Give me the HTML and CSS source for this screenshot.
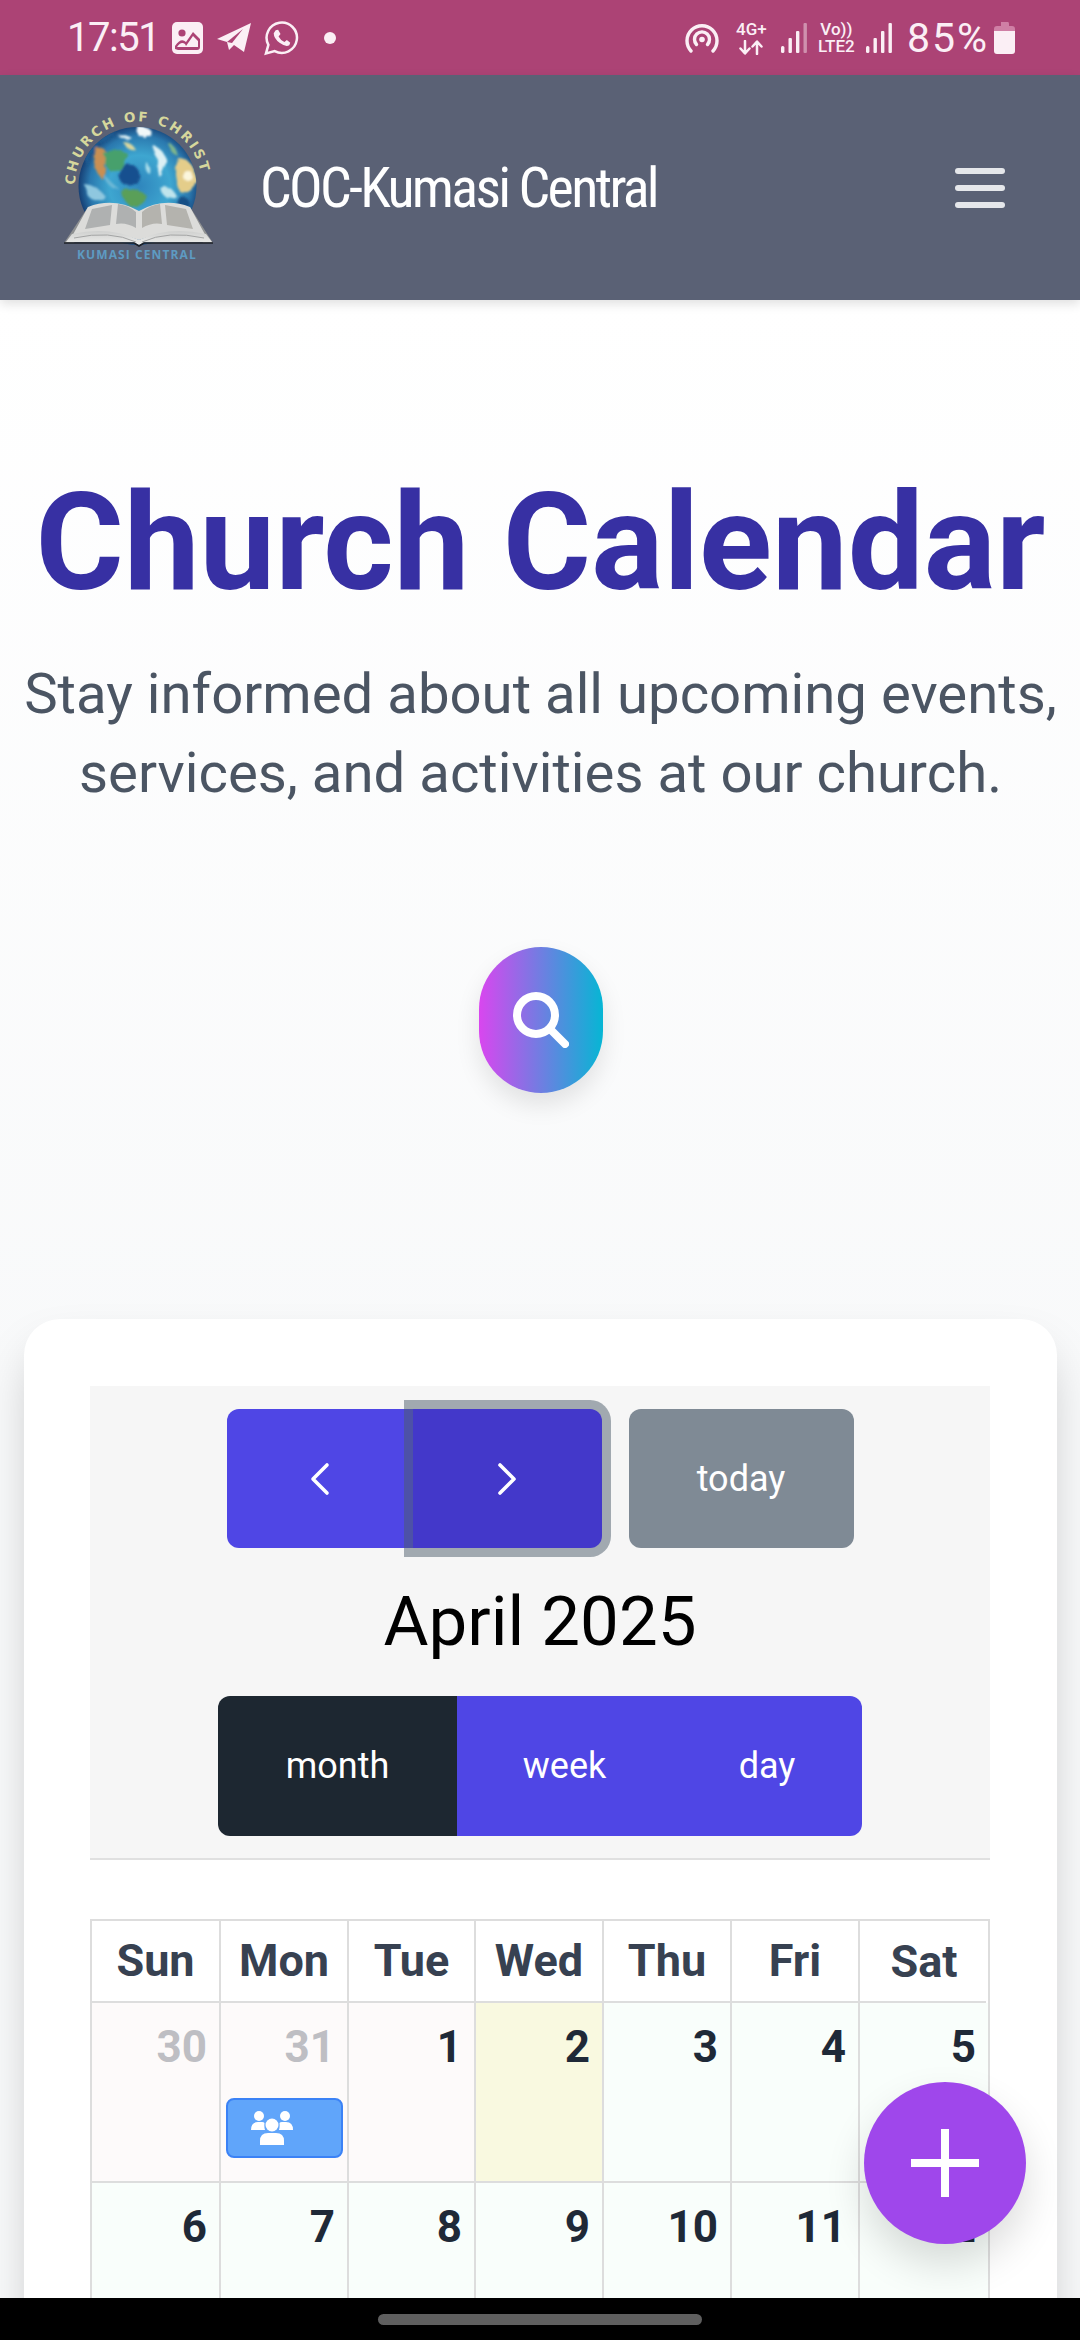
FILE: index.html
```html
<!DOCTYPE html>
<html lang="en">

<head>
    <meta charset="UTF-8">
    <meta name="viewport" content="width=device-width, initial-scale=1.0">
    <title>Church Calendar</title>
    <link rel="stylesheet" href="styles.css">
</head>

<body>
    <div class="status-bar">
        <div class="status-left">
            <span class="status-time">17:51</span>
            <svg class="ic-image" viewBox="0 0 31 32"><rect width="31" height="32" rx="5" fill="#fbeff5"/><circle cx="10" cy="11" r="3.6" fill="#ac4375"/><path d="M3 27 L3 24 Q9 15 14 20 L21 10 L28 17 V25 Q28 28 25 28 H6 Z" fill="#ac4375"/><path d="M5 25 Q9 19 13 22 L14 24 L21 14 L26 19 V25 Z" fill="#fbeff5"/></svg>
            <svg class="ic-telegram" viewBox="0 0 34 32"><path d="M0 17 L34 1 L27 30 L17 23 L12 28 L10 20 Z" fill="#fbeff5"/><path d="M10 20 L26 7 L15 21" fill="#ac4375"/></svg>
            <svg class="ic-whatsapp" viewBox="0 0 36 36"><path d="M2 34 L4.5 25 A15.6 15.6 0 1 1 11 31.5 Z" fill="none" stroke="#fbeff5" stroke-width="2.6"/><path d="M12 10 L14.5 9.5 L17 14 L15 16.5 Q17 20.500 21 22 L23.500 20 L27 23 L26 25.500 Q22 27.500 16 23 Q10 18 10 13 Z" fill="#fbeff5"/></svg>
            <span class="status-dot"></span>
        </div>
        <div class="status-right">
            <svg class="ic-hotspot" viewBox="0 0 34 30"><path d="M6 28 A15 15 0 1 1 28 28" fill="none" stroke="#fbeff5" stroke-width="3.400" stroke-linecap="round"/><path d="M11.500 21.500 A7.500 7.500 0 1 1 22.500 21.500" fill="none" stroke="#fbeff5" stroke-width="3.400" stroke-linecap="round"/><circle cx="17" cy="16.500" r="2.800" fill="#fbeff5"/></svg>
            <span class="net-label net-4g">4G+
                <svg class="net-arrows" viewBox="0 0 24 15"><path d="M6 1 V13 M1.500 8.500 L6 13.500 L10.500 8.500 M18 14 V2 M13.500 6.500 L18 1.500 L22.500 6.500" fill="none" stroke="#fbeff5" stroke-width="2.500" stroke-linecap="round" stroke-linejoin="round"/></svg>
            </span>
            <svg class="ic-signal" viewBox="0 0 26 30"><rect x="0" y="23" width="3.400" height="7" rx="1.500" fill="#fbeff5"/><rect x="7.500" y="15" width="3.400" height="15" rx="1" fill="#fbeff5"/><rect x="15" y="8" width="3.400" height="22" rx="1" fill="#fbeff5"/><rect x="22.500" y="0" width="3.400" height="30" rx="1" fill="#fbeff5" opacity=".45"/></svg>
            <span class="net-label net-volte">Vo))<br>LTE2</span>
            <svg class="ic-signal" viewBox="0 0 26 30"><rect x="0" y="23" width="3.400" height="7" rx="1.500" fill="#fbeff5"/><rect x="7.500" y="15" width="3.400" height="15" rx="1" fill="#fbeff5"/><rect x="15" y="8" width="3.400" height="22" rx="1" fill="#fbeff5"/><rect x="22.500" y="0" width="3.400" height="30" rx="1" fill="#fbeff5"/></svg>
            <span class="status-batt-text">85%</span>
            <svg class="ic-battery" viewBox="0 0 21 32"><path d="M7 0 H14 Q15 0 15 2 V4 H7 V2 Q7 0 7 0 Z M3 4 H18 Q21 4 21 7 V9 H0 V7 Q0 4 3 4 Z" fill="#cf7fa5"/><path d="M0 9 H21 V29 Q21 32 18 32 H3 Q0 32 0 29 Z" fill="#fbeff5"/></svg>
        </div>
    </div>

    <header class="app-bar">
        <svg class="logo" viewBox="0 0 160 170">
            <defs>
                <radialGradient id="globe" cx="52%" cy="50%" r="52%">
                    <stop offset="0" stop-color="#2f86bd"/>
                    <stop offset=".5" stop-color="#3ea6d0"/>
                    <stop offset=".82" stop-color="#2a78ae"/>
                    <stop offset="1" stop-color="#163f74"/>
                </radialGradient>
                <linearGradient id="cover" x1="0" y1="0" x2="0" y2="1">
                    <stop offset="0" stop-color="#cfd0cf"/>
                    <stop offset="1" stop-color="#eeeeec"/>
                </linearGradient>
                <clipPath id="globeClip"><circle cx="77.500" cy="86" r="59"/></clipPath>
                <filter id="paint" x="-10%" y="-10%" width="120%" height="120%">
                    <feTurbulence type="fractalNoise" baseFrequency=".14" numOctaves="2" seed="4"/>
                    <feDisplacementMap in="SourceGraphic" scale="5"/>
                    <feGaussianBlur stdDeviation="1"/>
                </filter>
                <path id="arc" d="M15 85 A63 63 0 0 1 142 85"/>
            </defs>
            <circle cx="77.500" cy="86" r="59" fill="url(#globe)"/>
            <g clip-path="url(#globeClip)">
                <g filter="url(#paint)">
                    <path d="M24 58 Q36 34 58 32 L40 44 Q30 50 28 66 Z" fill="#1d5c92"/>
                    <path d="M34 50 Q42 44 46 52 Q46 68 43 80 Q32 70 34 50 Z" fill="#c88f52"/>
                    <path d="M44 54 Q56 46 68 54 Q66 68 54 72 Q46 72 44 54 Z" fill="#47a06c"/>
                    <path d="M63 42 Q72 42 76 50 Q68 52 63 42 Z" fill="#d9d79f"/>
                    <path d="M76 27 Q88 26 92 32 Q88 38 80 37 Q76 33 76 27 Z" fill="#f1f8f9"/>
                    <path d="M58 36 Q66 34 72 38 Q66 42 58 36 Z" fill="#dff0f3"/>
                    <path d="M94 46 Q102 48 107 60 Q104 70 100 78 Q97 70 98 60 Q92 52 94 46 Z" fill="#dcf0f4"/>
                    <path d="M108 42 Q116 46 118 56 Q110 54 108 42 Z" fill="#7fb58c"/>
                    <path d="M118 58 Q132 58 137 78 Q132 96 120 92 Q113 74 118 58 Z" fill="#e4cd8a"/>
                    <circle cx="128" cy="76" r="5" fill="#fbf6dc"/>
                    <circle cx="69" cy="75" r="10.500" fill="#174f8f"/>
                    <path d="M86 62 Q92 66 90 74 Q84 72 86 62 Z" fill="#a6dbe9"/>
                    <path d="M60 90 Q74 86 87 96 Q84 106 72 108 Q64 102 60 90 Z" fill="#5a9f58"/>
                    <path d="M24 84 Q36 84 47 98 Q36 104 28 96 Z" fill="#8fc7df"/>
                    <path d="M100 88 Q112 84 116 96 Q106 104 100 88 Z" fill="#bfe4ec"/>
                    <path d="M44 74 Q50 82 58 88 Q48 90 44 74 Z" fill="#6db8d6"/>
                    <path d="M120 96 Q130 96 130 106 L114 112 Z" fill="#194f86"/>
                </g>
            </g>
            <text class="logo-arc"><textPath href="#arc">CHURCH OF CHRIST</textPath></text>

            <path d="M28 107 L4 143 L14 143 L33 110 Z M130 107 L153 143 L143 143 L125 110 Z" fill="#8f9192"/>
            <path d="M28 107 Q54 97 79 111 L79 140 Q50 128 10 140 Z" fill="#dcdcda"/>
            <path d="M130 107 Q104 97 79 111 L79 140 Q108 128 148 140 Z" fill="#dcdcda"/>
            <path d="M32 109 L52 105 L50 125 L25 129 Z M58 104 Q68 105 76 112 L76 128 Q66 122 56 124 Z" fill="#afb1b1"/>
            <path d="M126 109 L105 105 L107 125 L133 129 Z M100 104 Q90 105 82 112 L82 128 Q92 122 102 124 Z" fill="#b4b3ae"/>
            <path d="M6 142 L12 134 Q50 126 79 140 Q108 126 146 134 L152 142 L84 142.500 L79 145 L74 142.500 Z" fill="url(#cover)"/>
            <path d="M14 138 Q50 130 76 142 M144 138 Q108 130 82 142" fill="none" stroke="#a3a4a4" stroke-width="1"/>
            <path d="M4 143 L74 143 L79 146 L84 143 L153 143" fill="none" stroke="#1d2027" stroke-width="1.600"/>
            <text class="logo-foot" x="17" y="159">KUMASI CENTRAL</text>
        </svg>
        <span class="brand">COC-Kumasi Central</span>
        <button class="menu-btn" aria-label="menu"><span></span><span></span><span></span></button>
    </header>

    <main class="page">
        <section class="hero">
            <h1>Church Calendar</h1>
            <p>Stay informed about all upcoming events, services, and activities at our church.</p>
            <button class="search-btn" aria-label="search">
                <svg viewBox="0 0 56 56"><circle cx="23" cy="23" r="19" fill="none" stroke="#fff" stroke-width="8"/><path d="M37 37 L52 52" stroke="#fff" stroke-width="8" stroke-linecap="round"/></svg>
            </button>
        </section>

        <section class="card">
            <div class="cal-toolbar">
                <div class="nav-row">
                    <div class="nav-group">
                        <button class="cal-btn nav-prev"><svg viewBox="0 0 20 34"><path d="M17 3 L3 17 L17 31" fill="none" stroke="#fff" stroke-width="3.600" stroke-linecap="round" stroke-linejoin="round"/></svg></button>
                        <button class="cal-btn nav-next"><svg viewBox="0 0 20 34"><path d="M3 3 L17 17 L3 31" fill="none" stroke="#fff" stroke-width="3.600" stroke-linecap="round" stroke-linejoin="round"/></svg></button>
                    </div>
                    <button class="cal-btn today-btn">today</button>
                </div>
                <h2>April 2025</h2>
                <div class="view-group">
                    <button class="cal-btn view-month">month</button>
                    <button class="cal-btn view-week">week</button>
                    <button class="cal-btn view-day">day</button>
                </div>
            </div>

            <div class="cal-grid">
                <div class="cal-head">Sun</div>
                <div class="cal-head">Mon</div>
                <div class="cal-head">Tue</div>
                <div class="cal-head">Wed</div>
                <div class="cal-head">Thu</div>
                <div class="cal-head">Fri</div>
                <div class="cal-head">Sat</div>

                <div class="cal-day other"><span class="num">30</span></div>
                <div class="cal-day other"><span class="num">31</span>
                    <div class="cal-event">
                        <svg viewBox="0 0 42 34"><circle cx="8" cy="5" r="5" fill="#fff"/><circle cx="34" cy="5" r="5" fill="#fff"/><path d="M0 19 Q0 11 7 11 H11 Q13 11 13.500 12 Q13 16 14 19 Z M42 19 Q42 11 35 11 H31 Q29 11 28.500 12 Q29 16 28 19 Z" fill="#fff"/><circle cx="21" cy="14" r="6.500" fill="#fff"/><path d="M9 34 V30 Q9 22 17 22 H25 Q33 22 33 30 V34 Z" fill="#fff"/></svg>
                    </div>
                </div>
                <div class="cal-day past"><span class="num">1</span></div>
                <div class="cal-day today"><span class="num">2</span></div>
                <div class="cal-day"><span class="num">3</span></div>
                <div class="cal-day"><span class="num">4</span></div>
                <div class="cal-day"><span class="num">5</span></div>

                <div class="cal-day"><span class="num">6</span></div>
                <div class="cal-day"><span class="num">7</span></div>
                <div class="cal-day"><span class="num">8</span></div>
                <div class="cal-day"><span class="num">9</span></div>
                <div class="cal-day"><span class="num">10</span></div>
                <div class="cal-day"><span class="num">11</span></div>
                <div class="cal-day"><span class="num">12</span></div>
            </div>
        </section>

        <button class="fab" aria-label="add"><span class="fab-plus"></span></button>
    </main>

    <div class="nav-bar"><span class="nav-pill"></span></div>
</body>

</html>
```

FILE: styles.css
```css
* {
    box-sizing: border-box;
}

html,
body {
    margin: 0;
    height: 100%;
}

body {
    width: 1080px;
    height: 2340px;
    display: flex;
    flex-direction: column;
    overflow: hidden;
    font-family: Roboto, "Liberation Sans", sans-serif;
    background: #fff;
}

button {
    font-family: inherit;
    border: 0;
    padding: 0;
}

/* status bar */
.status-bar {
    height: 75px;
    flex: none;
    background: #ac4375;
    color: #fbeff5;
    display: flex;
    justify-content: space-between;
    align-items: center;
    padding: 0 65px 0 67px;
}

.status-left,
.status-right {
    display: flex;
    align-items: center;
}

.status-time {
    font-size: 40px;
    letter-spacing: -1.500px;
    width: 105px;
}

.ic-image {
    width: 31px;
    height: 32px;
}

.ic-telegram {
    width: 34px;
    height: 32px;
    margin-left: 14px;
}

.ic-whatsapp {
    width: 35px;
    height: 36px;
    margin-left: 13px;
}

.status-dot {
    width: 12px;
    height: 12px;
    border-radius: 50%;
    background: #fbeff5;
    margin-left: 25px;
}

.ic-hotspot {
    width: 34px;
    height: 30px;
}

.net-label {
    font-weight: 500;
    text-align: center;
    line-height: 1;
}

.net-4g {
    font-size: 17px;
    width: 33px;
    margin-left: 16px;
    white-space: nowrap;
}

.net-arrows {
    display: block;
    width: 24px;
    height: 15px;
    margin: 2px auto 0;
}

.ic-signal {
    width: 26px;
    height: 30px;
    margin-left: 13px;
}

.net-volte {
    font-size: 17px;
    width: 39px;
    margin-left: 10px;
}

.net-volte + .ic-signal {
    margin-left: 10px;
}

.status-batt-text {
    font-size: 41px;
    letter-spacing: 2px;
    margin-left: 15px;
}

.ic-battery {
    width: 21px;
    height: 32px;
    margin-left: 5px;
}

/* app bar */
.app-bar {
    height: 225px;
    flex: none;
    background: #5a6175;
    display: flex;
    align-items: center;
    padding: 0 60px;
    box-shadow: 0 4px 10px rgb(0 0 0 / 12%);
    position: relative;
    z-index: 2;
}

.logo {
    width: 160px;
    height: 170px;
    flex: none;
    margin-top: -5px;
}

.logo-arc {
    font-family: "DejaVu Sans", sans-serif;
    font-size: 13.500px;
    font-weight: 700;
    letter-spacing: 2.400px;
    fill: #d6d79c;
}

.logo-foot {
    font-family: "Open Sans", sans-serif;
    font-size: 12px;
    font-weight: 700;
    letter-spacing: 1.100px;
    fill: #5e9bc2;
}

.brand {
    font-size: 56px;
    color: #fff;
    margin-left: 40px;
    font-stretch: 75%;
    letter-spacing: -2.700px;
    white-space: nowrap;
    flex: 1;
}

.menu-btn {
    width: 50px;
    display: flex;
    flex-direction: column;
    gap: 11px;
    background: none;
    margin-right: 15px;
}

.menu-btn span {
    height: 6px;
    border-radius: 3px;
    background: #e5e7eb;
}

/* page */
.page {
    flex: 1;
    min-height: 0;
    overflow: hidden;
    position: relative;
    background: linear-gradient(#fff 0, #f8f9fa 1100px);
    padding: 0 23px 0 24px;
}

.hero {
    text-align: center;
    padding-top: 176px;
    height: 1019px;
}

.hero h1 {
    font-size: 135px;
    font-weight: 700;
    line-height: 1;
    color: #3730a3;
    margin: 0 -24px;
    white-space: nowrap;
}

.hero p {
    font-size: 56.300px;
    line-height: 79px;
    color: #4b5563;
    margin: 44px -10px 0;
}

.search-btn {
    display: block;
    width: 124px;
    height: 146px;
    border-radius: 62px;
    margin: 134px auto 0;
    background: linear-gradient(to right, #d946ef, #06b6d4);
    box-shadow: 0 12px 24px rgb(0 0 0 / 10%);
}

.search-btn svg {
    display: block;
    width: 56px;
    height: 56px;
    margin: 0 auto;
}

.card {
    background: #fff;
    border-radius: 36px;
    padding: 67px 67px 0 66px;
    height: 1100px;
    box-shadow: 0 25px 50px -12px rgb(0 0 0 / 25%);
}

/* calendar toolbar */
.cal-toolbar {
    background: #f6f6f6;
    border-bottom: 2px solid #e0e0e0;
    height: 474px;
    padding-top: 23px;
    display: flex;
    flex-direction: column;
    align-items: center;
}

.cal-btn {
    color: #fff;
    font-size: 36px;
    height: 139px;
    display: flex;
    align-items: center;
    justify-content: center;
}

.nav-row {
    display: flex;
    gap: 27px;
}

.nav-group {
    display: flex;
}

.nav-prev {
    width: 186px;
    background: #4f46e5;
    border-radius: 12px 0 0 12px;
}

.nav-next {
    width: 189px;
    background: #4338ca;
    border-radius: 0 12px 12px 0;
    box-shadow: 0 0 0 9px rgb(76 91 106 / 50%);
    position: relative;
}

.nav-prev svg,
.nav-next svg {
    width: 20px;
    height: 34px;
}

.today-btn {
    width: 225px;
    background: #7f8a95;
    border-radius: 12px;
}

.cal-toolbar h2 {
    font-size: 69px;
    font-weight: 400;
    line-height: 1;
    color: #000;
    margin: 39px 0 0;
}

.view-group {
    display: flex;
    margin-top: 40px;
}

.view-group .cal-btn {
    height: 140px;
    background: #4f46e5;
}

.view-group .view-month {
    width: 239px;
    background: #1d2731;
    border-radius: 12px 0 0 12px;
}

.view-week {
    width: 215px;
}

.view-day {
    width: 190px;
}

.view-group .view-day {
    border-radius: 0 12px 12px 0;
}

/* calendar grid */
.cal-grid {
    display: grid;
    grid-template-columns: 129px 128px 127px 128px 128px 128px 130px;
    grid-template-rows: 82px 180px 180px;
    margin-top: 59px;
    border-top: 2px solid #ddd;
    border-left: 2px solid #ddd;
}

.cal-head {
    border-right: 2px solid #ddd;
    border-bottom: 2px solid #ddd;
    background: #fff;
    font-size: 45px;
    font-weight: 700;
    color: #374151;
    display: flex;
    align-items: center;
    justify-content: center;
    padding-bottom: 2px;
}

.cal-head:nth-child(7) {
    border-bottom: 0;
    background: linear-gradient(#ddd, #ddd) left bottom / calc(100% - 2px) 2px no-repeat #fff;
}

.cal-day {
    border-right: 2px solid #ddd;
    border-bottom: 2px solid #ddd;
    background: #f9fefb;
    padding: 19px 12px 0;
    text-align: right;
    display: flex;
    flex-direction: column;
}

.cal-day.other,
.cal-day.past {
    background: #fdfafa;
}

.cal-day.today {
    background: #f9f9e0;
}

.num {
    font-size: 44px;
    font-weight: 700;
    line-height: 50px;
    color: #1f2937;
}

.other .num {
    color: #bebec3;
}

.cal-event {
    height: 60px;
    margin: 26px -8px 0 -7px;
    background: #60a5fa;
    border: 2px solid #3b82f6;
    border-radius: 8px;
    display: flex;
    align-items: center;
    padding-left: 23px;
}

.cal-event svg {
    width: 42px;
    height: 34px;
}

/* add button */
.fab {
    position: absolute;
    left: 864px;
    top: 1782px;
    width: 162px;
    height: 162px;
    border-radius: 50%;
    background: #9f47eb;
    box-shadow: 0 20px 40px rgb(0 0 0 / 14%);
    z-index: 3;
}

.fab-plus {
    position: absolute;
    left: 47px;
    top: 47px;
    width: 68px;
    height: 68px;
    background:
        linear-gradient(#fff, #fff) center / 100% 8px no-repeat,
        linear-gradient(#fff, #fff) center / 8px 100% no-repeat;
    border-radius: 4px;
}

/* android nav */
.nav-bar {
    height: 42px;
    flex: none;
    background: #000;
    display: flex;
    justify-content: center;
    padding-top: 16px;
    position: relative;
    z-index: 4;
}

.nav-pill {
    width: 324px;
    height: 11px;
    border-radius: 6px;
    background: #5f5f5f;
}
```
